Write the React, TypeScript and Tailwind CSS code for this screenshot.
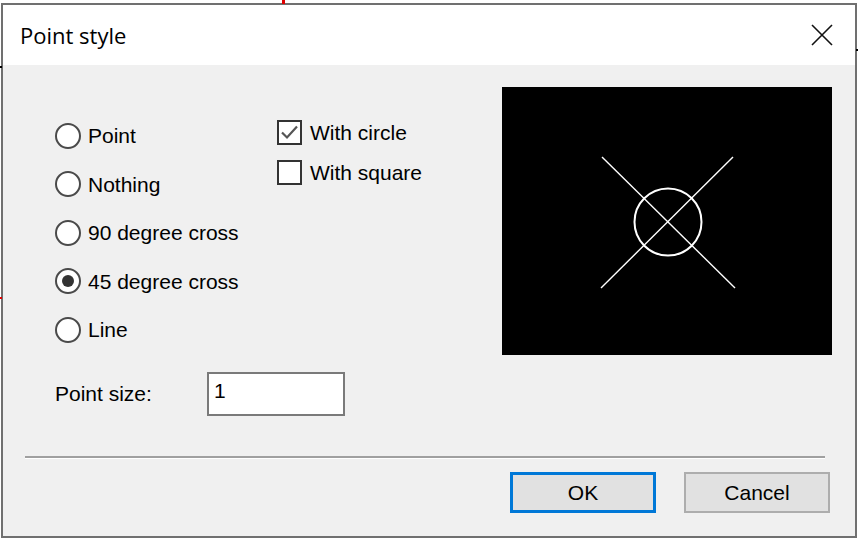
const radios = [
  { label: 'Point', checked: false },
  { label: 'Nothing', checked: false },
  { label: '90 degree cross', checked: false },
  { label: '45 degree cross', checked: true },
  { label: 'Line', checked: false },
];

const checks = [
  { label: 'With circle', checked: true },
  { label: 'With square', checked: false },
];

function Radio({ checked }: { checked: boolean }) {
  return (
    <div className="w-[26px] h-[26px] rounded-full border-2 border-[#4a4a4a] bg-white flex items-center justify-center shrink-0">
      {checked && <div className="w-[12px] h-[12px] rounded-full bg-[#333]" />}
    </div>
  );
}

function Check({ checked }: { checked: boolean }) {
  return (
    <div className="w-[25px] h-[25px] border-2 border-[#333] bg-white shrink-0 flex items-center justify-center">
      {checked && (
        <svg width="19" height="19" viewBox="0 0 19 19">
          <path d="M2 9.5 L7 14.5 L17 3.5" fill="none" stroke="#555" strokeWidth="2.2" />
        </svg>
      )}
    </div>
  );
}

export default function App() {
  return (
    <div className="relative w-[858px] h-[538px] bg-white overflow-hidden" style={{ fontFamily: '"Liberation Sans", Arial, sans-serif' }}>
      {/* bits of the window behind */}
      <div className="absolute left-[282px] top-0 w-[3px] h-[4px] bg-[#e00000]" />
      <div className="absolute left-0 top-[66px] w-[2px] h-[2px] bg-black" />
      <div className="absolute left-0 top-[297px] w-[2px] h-[2px] bg-[#e00000]" />
      <div className="absolute left-[856px] top-[49px] w-[2px] h-[2px] bg-black" />

      <div className="ml-[1px] mt-[3px] w-[856px] h-[535px] border-2 border-[#707070] flex flex-col bg-[#f0f0f0]">
        {/* title bar */}
        <div className="h-[60px] bg-white flex items-center justify-between pl-[17px] pr-[22px] shrink-0">
          <span className="text-[22px] text-black" style={{ fontFamily: '"Open Sans", "Noto Sans", sans-serif' }}>
            Point style
          </span>
          <svg width="22" height="22" viewBox="0 0 22 22">
            <path d="M1 1 L21 21 M21 1 L1 21" stroke="#111" strokeWidth="1.6" />
          </svg>
        </div>

        {/* body */}
        <div className="flex flex-col text-[21px] text-black">
          <div className="flex items-start pt-[22px] pl-[52px]">
            <div className="w-[222px] mt-[24.5px] flex flex-col">
              {radios.map((r) => (
                <div key={r.label} className="h-[48.5px] flex items-center gap-[7px]">
                  <Radio checked={r.checked} />
                  <span className="leading-none">{r.label}</span>
                </div>
              ))}
            </div>
            <div className="w-[225px] mt-[25px] flex flex-col">
              {checks.map((c) => (
                <div key={c.label} className="h-[40px] flex items-center gap-[8px]">
                  <Check checked={c.checked} />
                  <span className="leading-none">{c.label}</span>
                </div>
              ))}
            </div>
            <div className="w-[330px] h-[268px] bg-black">
              <svg width="330" height="268" viewBox="0 0 330 268">
                <g stroke="#fff" strokeWidth="1.4" fill="none">
                  <line x1="100" y1="70" x2="233" y2="201" />
                  <line x1="231" y1="70" x2="99" y2="201" />
                  <circle cx="166" cy="135" r="33.5" strokeWidth="2" />
                </g>
              </svg>
            </div>
          </div>

          <div className="flex items-center pl-[52px] mt-[17px]">
            <span className="w-[152px]">Point size:</span>
            <div className="w-[138px] h-[44px] border-2 border-[#7a7a7a] bg-white flex items-start pl-[5px] pt-[6px]">
              <span className="leading-none">1</span>
            </div>
          </div>

          <div className="ml-[22px] w-[800px] mt-[40px] border-t-2 border-[#a0a0a0] border-b border-b-white" />

          <div className="flex pl-[507px] mt-[13px] gap-[28px]">
            <div className="w-[146px] h-[41px] border-[3px] border-[#0078d7] bg-[#e1e1e1] flex items-center justify-center">
              OK
            </div>
            <div className="w-[146px] h-[41px] border-2 border-[#adadad] bg-[#e1e1e1] flex items-center justify-center">
              Cancel
            </div>
          </div>
        </div>
      </div>
    </div>
  );
}
